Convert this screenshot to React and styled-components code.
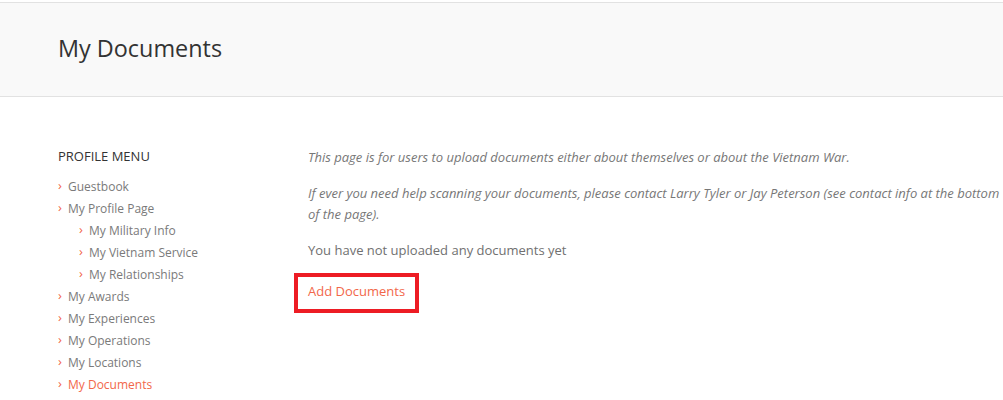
import React from "react";
import styled, { createGlobalStyle } from "styled-components";

const GlobalStyle = createGlobalStyle`
  html, body {
    margin: 0;
    padding: 0;
    background: #fff;
    font-family: "Open Sans", "Liberation Sans", sans-serif;
    color: #666;
  }
`;

const PageHeader = styled.div`
  margin-top: 2px;
  height: 95px;
  box-sizing: border-box;
  padding: 0 0 4px 58px;
  background: #f9f9f9;
  border-top: 1px solid #e2e2e2;
  border-bottom: 1px solid #e2e2e2;
  display: flex;
  align-items: center;
`;

const Title = styled.h1`
  margin: 0;
  font-size: 23.4px;
  font-weight: 400;
  color: #333;
`;

const Body = styled.div`
  display: flex;
  padding: 50px 0 0 58px;
`;

const Sidebar = styled.div`
  width: 250px;
  flex-shrink: 0;
`;

const MenuTitle = styled.h4`
  margin: 0 0 10px;
  font-size: 13px;
  font-weight: 400;
  color: #333;
  line-height: 18px;
`;

const MenuList = styled.ul`
  list-style: none;
  margin: 0;
  padding: 0;
`;

const MenuItem = styled.li`
  display: flex;
  align-items: center;
  height: 22px;
  padding-left: ${(p) => (p.$sub ? 21 : 0)}px;
  font-size: 12px;
  color: ${(p) => (p.$active ? "#f2674a" : "#7a7a7a")};
`;

const Chevron = styled.span`
  color: #f2674a;
  font-size: 13px;
  width: 10px;
  line-height: 1;
  position: relative;
  top: -1px;
`;

const Content = styled.div`
  width: 695px;
  font-size: 13px;
  line-height: 21px;
  color: #777;
`;

const Note = styled.p`
  margin: 0 0 15px;
  font-style: italic;
`;

const Plain = styled.p`
  margin: 0 0 12px;
  color: #707070;
`;

const Highlight = styled.div`
  display: inline-block;
  margin-left: -14px;
  border: 4px solid #ed1c24;
  padding: 4px 10px 7px 10px;
`;

const AddLink = styled.a`
  color: #f2674a;
  text-decoration: none;
  font-size: 13px;
`;

const menu = [
  { label: "Guestbook" },
  { label: "My Profile Page" },
  { label: "My Military Info", sub: true },
  { label: "My Vietnam Service", sub: true },
  { label: "My Relationships", sub: true },
  { label: "My Awards" },
  { label: "My Experiences" },
  { label: "My Operations" },
  { label: "My Locations" },
  { label: "My Documents", active: true },
];

export default function App() {
  return (
    <>
      <GlobalStyle />
      <PageHeader>
        <Title>My Documents</Title>
      </PageHeader>
      <Body>
        <Sidebar>
          <MenuTitle>PROFILE MENU</MenuTitle>
          <MenuList>
            {menu.map((item) => (
              <MenuItem key={item.label} $sub={item.sub} $active={item.active}>
                <Chevron>›</Chevron>
                {item.label}
              </MenuItem>
            ))}
          </MenuList>
        </Sidebar>
        <Content>
          <Note>
            This page is for users to upload documents either about themselves
            or about the Vietnam War.
          </Note>
          <Note>
            If ever you need help scanning your documents, please contact Larry
            Tyler or Jay Peterson (see contact info at the bottom of the page).
          </Note>
          <Plain>You have not uploaded any documents yet</Plain>
          <Highlight>
            <AddLink href="#">Add Documents</AddLink>
          </Highlight>
        </Content>
      </Body>
    </>
  );
}
